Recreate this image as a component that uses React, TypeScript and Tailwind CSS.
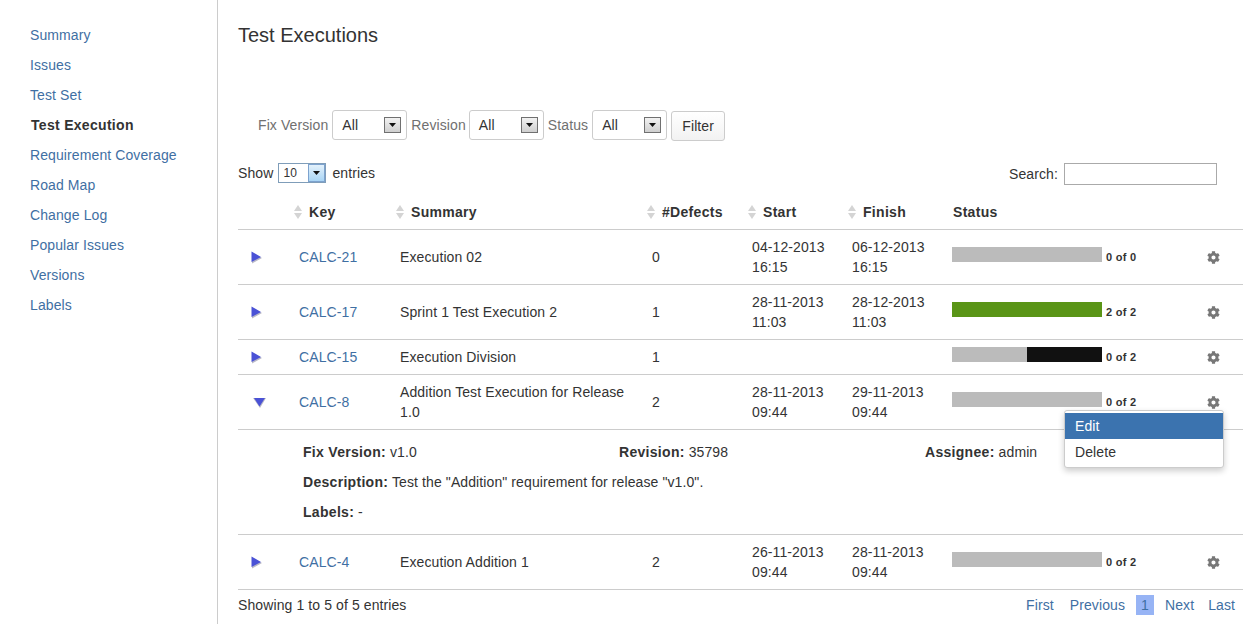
import { FaCog } from "react-icons/fa";

const navItems = [
  "Summary",
  "Issues",
  "Test Set",
  "Test Execution",
  "Requirement Coverage",
  "Road Map",
  "Change Log",
  "Popular Issues",
  "Versions",
  "Labels",
];

type Row = {
  id: string;
  summary: string;
  defects: string;
  start?: [string, string];
  finish?: [string, string];
  bar: "grey" | "green" | "split";
  label: string;
  open?: boolean;
};

const rows: Row[] = [
  { id: "CALC-21", summary: "Execution 02", defects: "0", start: ["04-12-2013", "16:15"], finish: ["06-12-2013", "16:15"], bar: "grey", label: "0 of 0" },
  { id: "CALC-17", summary: "Sprint 1 Test Execution 2", defects: "1", start: ["28-11-2013", "11:03"], finish: ["28-12-2013", "11:03"], bar: "green", label: "2 of 2" },
  { id: "CALC-15", summary: "Execution Division", defects: "1", bar: "split", label: "0 of 2" },
  { id: "CALC-8", summary: "Addition Test Execution for Release 1.0", defects: "2", start: ["28-11-2013", "09:44"], finish: ["29-11-2013", "09:44"], bar: "grey", label: "0 of 2", open: true },
  { id: "CALC-4", summary: "Execution Addition 1", defects: "2", start: ["26-11-2013", "09:44"], finish: ["28-11-2013", "09:44"], bar: "grey", label: "0 of 2" },
];

function SortArrows() {
  return (
    <svg width="8" height="14" viewBox="0 0 8 14" className="shrink-0">
      <polygon points="4,0 8,6 0,6" fill="#d4d4d4" />
      <polygon points="0,8 8,8 4,14" fill="#d4d4d4" />
    </svg>
  );
}

function Triangle({ open }: { open?: boolean }) {
  if (open) {
    return (
      <svg width="14" height="11" viewBox="0 0 14 11" className="ml-[14px] block blur-[0.4px]">
        <polygon points="1,1 14,1 8,11" fill="#b9b9c6" />
        <polygon points="2,1 13,1 7.5,9.5" fill="#4a52d6" />
      </svg>
    );
  }
  return (
    <svg width="11" height="13" viewBox="0 0 11 13" className="ml-[13px] block blur-[0.4px]">
      <polygon points="1,1.5 11,7 1,12.5" fill="#b9b9c6" />
      <polygon points="0.5,0.5 10,6 0.5,11" fill="#4a52d6" />
    </svg>
  );
}

function ArrowButton({ blue }: { blue?: boolean }) {
  return (
    <span
      className={
        blue
          ? "flex h-[18px] w-[17px] items-center justify-center border border-[#7da2ce] bg-gradient-to-b from-[#e3f1fb] to-[#a9d5f5]"
          : "flex h-4 w-[17px] items-center justify-center border border-[#707070] bg-gradient-to-b from-[#f2f2f2] to-[#cfcfcf]"
      }
    >
      <svg width="7" height="4" viewBox="0 0 7 4">
        <polygon points="0,0 7,0 3.5,4" fill="#111" />
      </svg>
    </span>
  );
}

function FilterSelect() {
  return (
    <span className="flex h-[30px] w-[75px] items-center justify-between rounded-[3px] border border-[#ccc] pl-[9px] pr-[5px] text-[#333]">
      All
      <ArrowButton />
    </span>
  );
}

function StatusBar({ bar, label }: { bar: Row["bar"]; label: string }) {
  return (
    <div className="flex h-5 items-start">
      {bar === "grey" && <div className="h-[15px] w-[150px] bg-[#bbb]" />}
      {bar === "green" && <div className="h-[15px] w-[150px] bg-[#5a9517]" />}
      {bar === "split" && (
        <div className="flex h-[15px] w-[150px]">
          <div className="w-[75px] bg-[#bbb]" />
          <div className="w-[75px] bg-[#111]" />
        </div>
      )}
      <span className="ml-1 text-[11px] leading-[21px] font-bold tracking-[0.3px] text-[#333]">{label}</span>
    </div>
  );
}

function DateCell({ value }: { value?: [string, string] }) {
  return (
    <td className="border-b border-[#ccc] px-[10px] py-[7px] align-middle">
      {value && (
        <>
          {value[0]}
          <br />
          {value[1]}
        </>
      )}
    </td>
  );
}

function HeaderCell({ label, wide }: { label?: string; wide?: boolean }) {
  return (
    <th className={wide ? "border-b border-[#ccc] py-[7px] pl-[6px] text-left font-bold tracking-[0.3px]" : "border-b border-[#ccc] py-[7px] pl-[5px] text-left font-bold tracking-[0.3px]"}>
      {label && (
        <span className="flex items-center gap-[7px]">
          <SortArrows />
          {label}
        </span>
      )}
    </th>
  );
}

export default function App() {
  return (
    <div className="flex h-[624px] overflow-hidden bg-white font-['Liberation_Sans',Arial,sans-serif] text-sm leading-5 tracking-[0.1px] text-[#333]">
      <aside className="w-[218px] shrink-0 border-r border-[#ccc] pt-[20px]">
        <ul className="flex flex-col">
          {navItems.map((item) => (
            <li
              key={item}
              className={
                item === "Test Execution"
                  ? "py-[5px] pl-[31px] font-bold tracking-[0.3px] text-[#333]"
                  : "py-[5px] pl-[30px] text-[#3f6fa3]"
              }
            >
              {item}
            </li>
          ))}
        </ul>
      </aside>

      <main className="relative min-w-0 flex-1 pl-5 pr-[7px] pt-5">
        <h1 className="text-xl leading-[30px] font-normal tracking-normal">Test Executions</h1>

        <div className="mt-[60px] flex h-[31px] items-start pl-5 text-[#707070]">
          <span className="mr-1 leading-[30px]">Fix Version</span>
          <FilterSelect />
          <span className="ml-1 mr-[3px] leading-[30px]">Revision</span>
          <FilterSelect />
          <span className="mx-1 leading-[30px]">Status</span>
          <FilterSelect />
          <button className="mt-px ml-1 h-[30px] w-[54px] rounded-[3px] border border-[#ccc] bg-gradient-to-b from-white to-[#f2f2f2] text-[#333]">
            Filter
          </button>
        </div>

        <div className="mt-[22px] flex h-[22px] items-start justify-between">
          <div className="flex items-center">
            Show
            <span className="ml-[5px] mr-[6px] flex h-5 w-12 items-center justify-between border border-[#7f9db9] pl-1 text-xs">
              10
              <ArrowButton blue />
            </span>
            entries
          </div>
          <div className="mr-[26px] flex items-center">
            Search:
            <span className="ml-[6px] block h-[22px] w-[153px] border border-[#aaa]" />
          </div>
        </div>

        <table className="mt-[10px] w-[1005px] table-fixed border-separate border-spacing-0">
          <colgroup>
            <col className="w-[51px]" />
            <col className="w-[101px]" />
            <col className="w-[252px]" />
            <col className="w-[100px]" />
            <col className="w-[100px]" />
            <col className="w-[100px]" />
            <col className="w-[255px]" />
            <col className="w-[46px]" />
          </colgroup>
          <thead>
            <tr>
              <HeaderCell />
              <HeaderCell label="Key" />
              <HeaderCell label="Summary" wide />
              <HeaderCell label="#Defects" />
              <HeaderCell label="Start" wide />
              <HeaderCell label="Finish" wide />
              <th className="border-b border-[#ccc] py-[7px] pl-[11px] text-left font-bold tracking-[0.3px]">Status</th>
              <th className="border-b border-[#ccc]" />
            </tr>
          </thead>
          <tbody>
            {rows.flatMap((row) => {
              const main = (
                <tr key={row.id}>
                  <td className="border-b border-[#ccc] align-middle">
                    <Triangle open={row.open} />
                  </td>
                  <td className="border-b border-[#ccc] px-[10px] py-[7px] align-middle text-[#3f6fa3]">{row.id}</td>
                  <td className="border-b border-[#ccc] px-[10px] py-[7px] align-middle">{row.summary}</td>
                  <td className="border-b border-[#ccc] px-[10px] py-[7px] align-middle">{row.defects}</td>
                  <DateCell value={row.start} />
                  <DateCell value={row.finish} />
                  <td className="border-b border-[#ccc] px-[10px] py-[7px] align-middle">
                    <StatusBar bar={row.bar} label={row.label} />
                  </td>
                  <td className="border-b border-[#ccc] pl-[10px] align-middle">
                    <FaCog className="mt-px text-[13px] text-[#777]" />
                  </td>
                </tr>
              );
              if (!row.open) return [main];
              return [
                main,
                <tr key={row.id + "-detail"}>
                  <td colSpan={8} className="border-b border-[#ccc] pt-3 pr-0 pb-3 pl-[65px]">
                    <div className="grid grid-cols-[316px_306px_1fr]">
                      <div>
                        <b className="tracking-[0.3px]">Fix Version:</b> v1.0
                      </div>
                      <div>
                        <b className="tracking-[0.3px]">Revision:</b> 35798
                      </div>
                      <div>
                        <b className="tracking-[0.3px]">Assignee:</b> admin
                      </div>
                    </div>
                    <div className="mt-[10px]">
                      <b className="tracking-[0.3px]">Description:</b> Test the "Addition" requirement for release "v1.0".
                    </div>
                    <div className="mt-[10px]">
                      <b className="tracking-[0.3px]">Labels:</b> -
                    </div>
                  </td>
                </tr>,
              ];
            })}
          </tbody>
        </table>

        <div className="mt-[5px] flex w-[1005px] items-center justify-between">
          <span>Showing 1 to 5 of 5 entries</span>
          <div className="mr-2 flex items-center text-[#3f6fa3]">
            <span>First</span>
            <span className="ml-4">Previous</span>
            <span className="ml-[11px] bg-[#97b4f5] px-[5px]">1</span>
            <span className="ml-[11px]">Next</span>
            <span className="ml-[14px]">Last</span>
          </div>
        </div>

        <div className="absolute top-[410px] left-[846px] w-[160px] rounded-[3px] border border-[#ccc] bg-white py-[2px] shadow-[0_3px_6px_rgba(0,0,0,0.2)]">
          <div className="h-[26px] bg-[#3b73af] px-[10px] leading-[26px] text-white">Edit</div>
          <div className="h-[26px] px-[10px] leading-[26px]">Delete</div>
        </div>
      </main>
    </div>
  );
}
